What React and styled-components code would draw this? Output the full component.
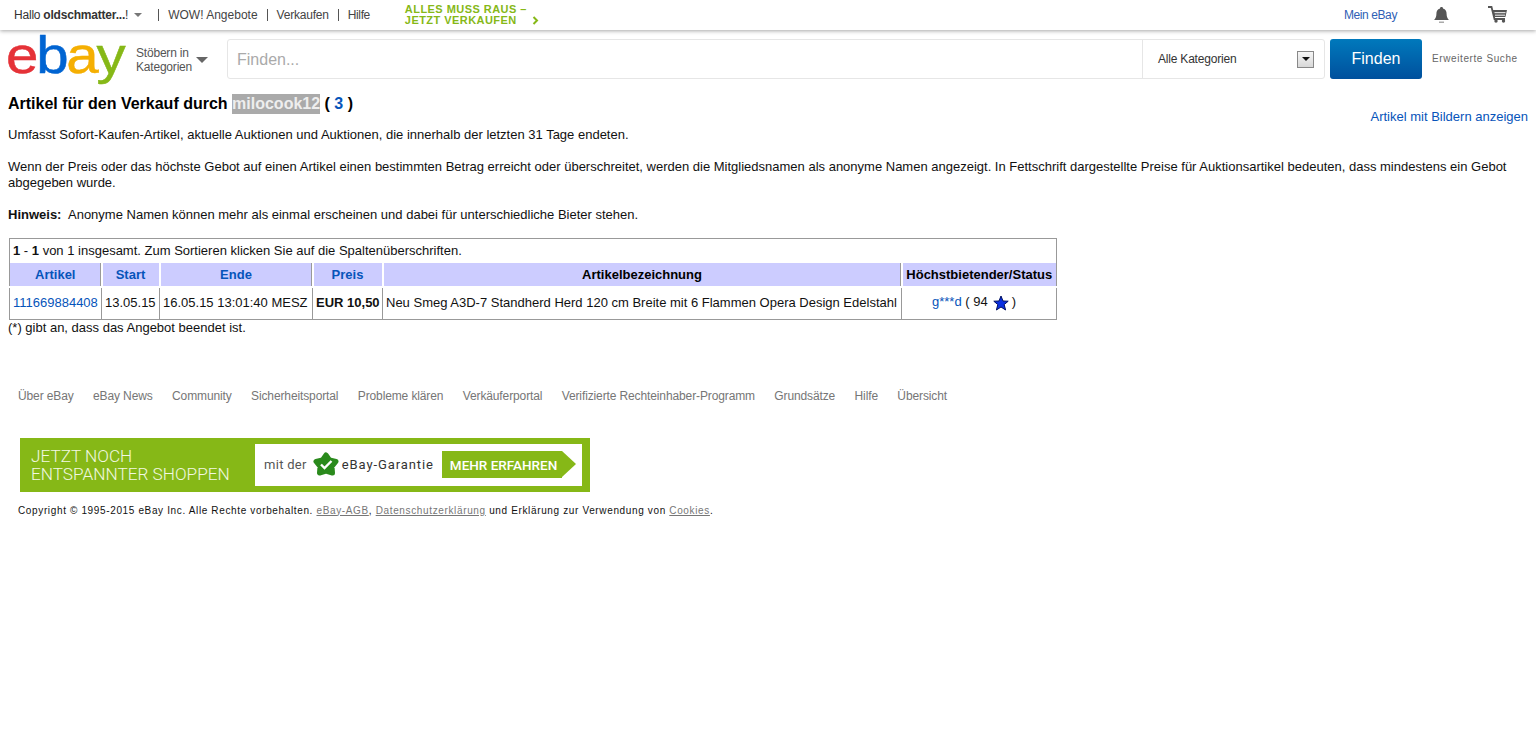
import React from "react";
import styled, { createGlobalStyle } from "styled-components";

const GlobalStyle = createGlobalStyle`
  html, body {
    margin: 0;
    padding: 0;
    background: #fff;
    font-family: "Liberation Sans", Arial, sans-serif;
    font-size: 12px;
    color: #000;
  }
  a { text-decoration: none; color: inherit; }
`;

const TopBar = styled.div`
  height: 30px;
  box-sizing: border-box;
  display: flex;
  align-items: center;
  padding: 0 0 1px 14px;
  background: #fff;
  box-shadow: 0 1px 4px rgba(0, 0, 0, 0.35);
  font-size: 12px;
  color: #333;
`;

const Greeting = styled.span`
  display: flex;
  align-items: center;
  letter-spacing: -0.2px;
  b { margin-left: 3px; font-weight: 700; color: #333; }
`;

const SmallCaret = styled.i`
  display: block;
  width: 0;
  height: 0;
  margin: 1px 16px 0 6px;
  border: 4px solid transparent;
  border-top: 4px solid #777;
  border-bottom: 0;
`;

const TopLink = styled.a`
  padding: 0 9px;
  line-height: 12px;
  border-left: 1px solid #555;
  color: #444;
  letter-spacing: ${(p) => p.$spacing || 0}px;
`;

const Promo = styled.a`
  margin-left: 26px;
  width: 140px;
  font-size: 11px;
  line-height: 11px;
  font-weight: 700;
  letter-spacing: 0.45px;
  color: #86b817;
  display: block;
`;

const Chevron = styled.svg`
  width: 7px;
  height: 9px;
  margin-left: 15px;
  vertical-align: -1px;
`;

const TopRight = styled.div`
  margin-left: auto;
  display: flex;
  align-items: center;
  padding-right: 28px;
`;

const MyEbay = styled.a`
  color: #2f5fb5;
  margin-right: 36px;
  letter-spacing: -0.4px;
`;

const BellIcon = styled.svg`
  width: 17px;
  height: 18px;
  margin-right: 38px;
`;

const CartIcon = styled.svg`
  width: 20px;
  height: 17px;
`;

const SearchRow = styled.div`
  display: flex;
  align-items: flex-start;
  padding: 9px 0 0 8px;
  height: 64px;
  box-sizing: border-box;
`;

const Logo = styled.div`
  width: 121px;
  height: 48px;
  margin: -11px 0 0 -2px;
  font-size: 52px;
  line-height: 54px;
  letter-spacing: -2px;
  -webkit-text-stroke: 0.5px;
  transform: scaleX(1.12);
  transform-origin: left center;
  white-space: nowrap;
`;

const LogoLetter = styled.span`
  color: ${(p) => p.$color};
`;

const Browse = styled.div`
  display: flex;
  align-items: center;
  width: 91px;
  height: 40px;
  padding-top: 2px;
  box-sizing: border-box;
  margin-left: 9px;
  line-height: 14px;
  letter-spacing: -0.2px;
  color: #555;
`;

const BrowseCaret = styled.i`
  display: block;
  width: 0;
  height: 0;
  margin-left: 4px;
  border: 6px solid transparent;
  border-top: 6px solid #666;
  border-bottom: 0;
`;

const SearchBox = styled.div`
  display: flex;
  width: 1098px;
  height: 40px;
  box-sizing: border-box;
  border: 1px solid #e6e6e6;
  border-radius: 3px;
`;

const SearchField = styled.div`
  flex: 1;
  padding-left: 9px;
  font-size: 16px;
  line-height: 40px;
  color: #aaa;
  border-right: 1px solid #e6e6e6;
`;

const CategoryPicker = styled.div`
  width: 181px;
  box-sizing: border-box;
  display: flex;
  align-items: center;
  justify-content: space-between;
  padding: 0 10px 0 15px;
  letter-spacing: -0.2px;
  color: #333;
`;

const PickerArrow = styled.span`
  width: 17px;
  height: 17px;
  box-sizing: border-box;
  display: flex;
  align-items: center;
  justify-content: center;
  border: 1px solid #888;
  background: linear-gradient(#f6f6f6, #d8d8d8);
  &::after {
    content: "";
    border: 4px solid transparent;
    border-top: 4px solid #111;
    border-bottom: 0;
  }
`;

const FindButton = styled.div`
  width: 92px;
  height: 40px;
  margin-left: 5px;
  border-radius: 3px;
  background: linear-gradient(#0079bc, #00509d);
  color: #fff;
  font-size: 16px;
  line-height: 39px;
  text-align: center;
`;

const AdvancedSearch = styled.a`
  margin-left: 10px;
  font-size: 10px;
  line-height: 39px;
  letter-spacing: 0.6px;
  color: #666;
`;

const Content = styled.div`
  padding: 0 8px;
`;

const TitleRow = styled.div`
  display: flex;
  justify-content: space-between;
  align-items: flex-start;
  height: 19px;
`;

const Title = styled.h1`
  margin: 0;
  font-size: 16px;
  line-height: 19px;
  font-weight: 700;
`;

const SellerName = styled.span`
  background: #aaa;
  color: #eee;
  padding: 1px 0 2px;
`;

const BlueCount = styled.a`
  color: #0654ba;
`;

const PhotoLink = styled.a`
  margin-top: 15px;
  font-size: 13px;
  line-height: 15px;
  color: #0654ba;
`;

const Para = styled.p`
  margin: ${(p) => p.$top || 16}px 0 0;
  font-size: 13px;
  line-height: 16px;
  color: #111;
`;

const TableWrap = styled.table`
  margin: 15px 0 0 1px;
  width: 1048px;
  table-layout: fixed;
  border-collapse: collapse;
  border: 1px solid #999;
  font-size: 13px;
`;

const SummaryCell = styled.td`
  height: 23px;
  padding: 0 3px 1px;
  color: #111;
`;

const Head = styled.th`
  height: 23px;
  padding: 0;
  background: #ccf;
  border-right: 2px solid #fff;
  border-bottom: 2px solid #fff;
  box-shadow: ${(p) => (p.$grey ? "inset -1px 0 0 #999" : "none")};
  font-size: 13px;
  font-weight: 700;
  color: ${(p) => (p.$dark ? "#000" : "#0654ba")};
  white-space: nowrap;
  &:last-child { border-right: 0; }
`;

const Cell = styled.td`
  height: 32px;
  padding: 0 3px 1px;
  box-sizing: border-box;
  text-align: left;
  font-weight: ${(p) => (p.$bold ? 700 : 400)};
  border-right: 1px solid #999;
  border-top: 1px solid #aaa;
  white-space: nowrap;
  color: #111;
  &:last-child { border-right: 0; }
`;

const StatusCell = styled(Cell)`
  padding-left: 30px;
`;

const BlueLink = styled.a`
  color: #0654ba;
`;

const Star = styled.svg`
  width: 16px;
  height: 16px;
  margin: 0 3px 0 5px;
  vertical-align: -5px;
`;

const Note = styled.div`
  font-size: 13px;
  line-height: 14px;
  margin-top: 1px;
  color: #111;
`;

const FooterNav = styled.nav`
  display: flex;
  gap: 19.4px;
  margin: 54px 0 0 10px;
  line-height: 14px;
  font-size: 12px;
  letter-spacing: -0.12px;
  color: #767676;
`;

const Banner = styled.div`
  width: 570px;
  height: 54px;
  margin: 35px 0 0 12px;
  padding: 6px 8px 6px 11px;
  box-sizing: border-box;
  display: flex;
  background: #86b817;
`;

const BannerHeadline = styled.div`
  width: 224px;
  padding-top: 3px;
  font-family: Roboto, "Liberation Sans", sans-serif;
  font-weight: 300;
  font-size: 17.2px;
  line-height: 18px;
  color: #f2f8e2;
`;

const BannerWhite = styled.div`
  flex: 1;
  display: flex;
  align-items: center;
  padding-left: 9px;
  background: #fff;
  color: #555;
  font-family: Roboto, "Liberation Sans", sans-serif;
  font-size: 13px;
  letter-spacing: 0.3px;
`;

const Badge = styled.svg`
  width: 26px;
  height: 25px;
  margin: 0 3px 0 6px;
`;

const GuaranteeText = styled.span`
  color: #333;
  letter-spacing: 0.9px;
`;

const MoreButton = styled.div`
  position: relative;
  width: 120px;
  height: 27px;
  margin-left: 8px;
  padding-left: 8px;
  box-sizing: border-box;
  background: #86b817;
  color: #fff;
  font-size: 13.5px;
  font-weight: 500;
  letter-spacing: 0;
  line-height: 29px;
  &::after {
    content: "";
    position: absolute;
    left: 120px;
    top: 0;
    border-left: 14px solid #86b817;
    border-top: 13.5px solid transparent;
    border-bottom: 13.5px solid transparent;
  }
`;

const Copyright = styled.div`
  margin: 13px 0 0 10px;
  font-size: 10px;
  line-height: 12px;
  letter-spacing: 0.64px;
  color: #111;
  a { color: #767676; text-decoration: underline; }
`;

const columns = [92, 58, 153, 70, 519, 155];
const footerLinks = [
  "Über eBay",
  "eBay News",
  "Community",
  "Sicherheitsportal",
  "Probleme klären",
  "Verkäuferportal",
  "Verifizierte Rechteinhaber-Programm",
  "Grundsätze",
  "Hilfe",
  "Übersicht",
];

export default function App() {
  return (
    <>
      <GlobalStyle />
      <TopBar>
        <Greeting>
          Hallo <b>oldschmatter...</b>!
          <SmallCaret />
        </Greeting>
        <TopLink>WOW! Angebote</TopLink>
        <TopLink $spacing={-0.2}>Verkaufen</TopLink>
        <TopLink $spacing={-0.4}>Hilfe</TopLink>
        <Promo>
          ALLES MUSS RAUS –<br />
          JETZT VERKAUFEN
          <Chevron viewBox="0 0 7 9">
            <path d="M1.5 1 L5 4.5 L1.5 8" fill="none" stroke="#86b817" strokeWidth="2" />
          </Chevron>
        </Promo>
        <TopRight>
          <MyEbay>Mein eBay</MyEbay>
          <BellIcon viewBox="0 0 17 18">
            <path d="M8.5 1 C9.5 1 10 1.6 10 2.4 C12.6 3 13.6 5 13.6 8 C13.6 11 14.6 12.6 16 14 L1 14 C2.4 12.6 3.4 11 3.4 8 C3.4 5 4.4 3 7 2.4 C7 1.6 7.5 1 8.5 1 Z" fill="#555" />
            <rect x="6" y="15.5" width="5" height="1.5" fill="#aaa" />
          </BellIcon>
          <CartIcon viewBox="0 0 20 17">
            <path d="M0 1 H3.5 L6.5 13 H17" fill="none" stroke="#555" strokeWidth="1.8" />
            <path d="M4.6 4 H19 L17.4 11 H6.4 Z" fill="#555" />
            <rect x="6.5" y="6" width="11" height="1.2" fill="#ddd" />
            <rect x="7" y="8.6" width="10" height="1.2" fill="#ddd" />
            <circle cx="8" cy="15" r="1.7" fill="#555" />
            <circle cx="15.5" cy="15" r="1.7" fill="#555" />
          </CartIcon>
        </TopRight>
      </TopBar>

      <SearchRow>
        <Logo>
          <LogoLetter $color="#e53238">e</LogoLetter>
          <LogoLetter $color="#0064d2">b</LogoLetter>
          <LogoLetter $color="#f5af02">a</LogoLetter>
          <LogoLetter $color="#86b817">y</LogoLetter>
        </Logo>
        <Browse>
          <span>
            Stöbern in
            <br />
            Kategorien
          </span>
          <BrowseCaret />
        </Browse>
        <SearchBox>
          <SearchField>Finden...</SearchField>
          <CategoryPicker>
            Alle Kategorien
            <PickerArrow />
          </CategoryPicker>
        </SearchBox>
        <FindButton>Finden</FindButton>
        <AdvancedSearch>Erweiterte Suche</AdvancedSearch>
      </SearchRow>

      <Content>
        <TitleRow>
          <Title>
            Artikel für den Verkauf durch <SellerName>milocook12</SellerName> ({" "}
            <BlueCount>3</BlueCount> )
          </Title>
          <PhotoLink>Artikel mit Bildern anzeigen</PhotoLink>
        </TitleRow>
        <Para $top={14}>
          Umfasst Sofort-Kaufen-Artikel, aktuelle Auktionen und Auktionen, die innerhalb der letzten 31 Tage endeten.
        </Para>
        <Para>
          Wenn der Preis oder das höchste Gebot auf einen Artikel einen bestimmten Betrag erreicht oder überschreitet, werden die Mitgliedsnamen als anonyme Namen angezeigt. In Fettschrift dargestellte Preise für Auktionsartikel bedeuten, dass mindestens ein Gebot abgegeben wurde.
        </Para>
        <Para>
          <b>Hinweis:</b>&nbsp; Anonyme Namen können mehr als einmal erscheinen und dabei für unterschiedliche Bieter stehen.
        </Para>

        <TableWrap>
          <colgroup>
            {columns.map((w, i) => (
              <col key={i} width={w} />
            ))}
          </colgroup>
          <tbody>
            <tr>
              <SummaryCell colSpan={6}>
                <b>1</b> - <b>1</b> von 1 insgesamt. Zum Sortieren klicken Sie auf die Spaltenüberschriften.
              </SummaryCell>
            </tr>
            <tr>
              <Head $grey>Artikel</Head>
              <Head>Start</Head>
              <Head $grey>Ende</Head>
              <Head>Preis</Head>
              <Head $dark $grey>Artikelbezeichnung</Head>
              <Head $dark>Höchstbietender/Status</Head>
            </tr>
            <tr>
              <Cell>
                <BlueLink>111669884408</BlueLink>
              </Cell>
              <Cell>13.05.15</Cell>
              <Cell>16.05.15 13:01:40 MESZ</Cell>
              <Cell $bold>EUR 10,50</Cell>
              <Cell>Neu Smeg A3D-7 Standherd Herd 120 cm Breite mit 6 Flammen Opera Design Edelstahl</Cell>
              <StatusCell>
                <BlueLink>g***d</BlueLink> ( 94
                <Star viewBox="0 0 16 16">
                  <path d="M8 1 L10 6 L15.2 6.2 L11.2 9.6 L12.6 15 L8 12 L3.4 15 L4.8 9.6 L0.8 6.2 L6 6 Z" fill="#0a2fe0" stroke="#001060" strokeWidth="1" />
                </Star>
                )
              </StatusCell>
            </tr>
          </tbody>
        </TableWrap>
        <Note>(*) gibt an, dass das Angebot beendet ist.</Note>

        <FooterNav>
          {footerLinks.map((label) => (
            <a key={label}>{label}</a>
          ))}
        </FooterNav>

        <Banner>
          <BannerHeadline>
            JETZT NOCH
            <br />
            ENTSPANNTER SHOPPEN
          </BannerHeadline>
          <BannerWhite>
            mit der
            <Badge viewBox="0 0 26 25">
              <path d="M13 3 L16.5 8 L23 9.5 L19 14.5 L19.5 21 L13 19 L6.5 21 L7 14.5 L3 9.5 L9.5 8 Z" fill="#2a8a1c" stroke="#2a8a1c" strokeWidth="5" strokeLinejoin="round" />
              <path d="M8 12.5 L11.5 16 L18.5 9" fill="none" stroke="#fff" strokeWidth="2.4" />
            </Badge>
            <GuaranteeText>eBay-Garantie</GuaranteeText>
            <MoreButton>MEHR ERFAHREN</MoreButton>
          </BannerWhite>
        </Banner>

        <Copyright>
          Copyright © 1995-2015 eBay Inc. Alle Rechte vorbehalten. <a>eBay-AGB</a>, <a>Datenschutzerklärung</a> und Erklärung zur Verwendung von <a>Cookies</a>.
        </Copyright>
      </Content>
    </>
  );
}
